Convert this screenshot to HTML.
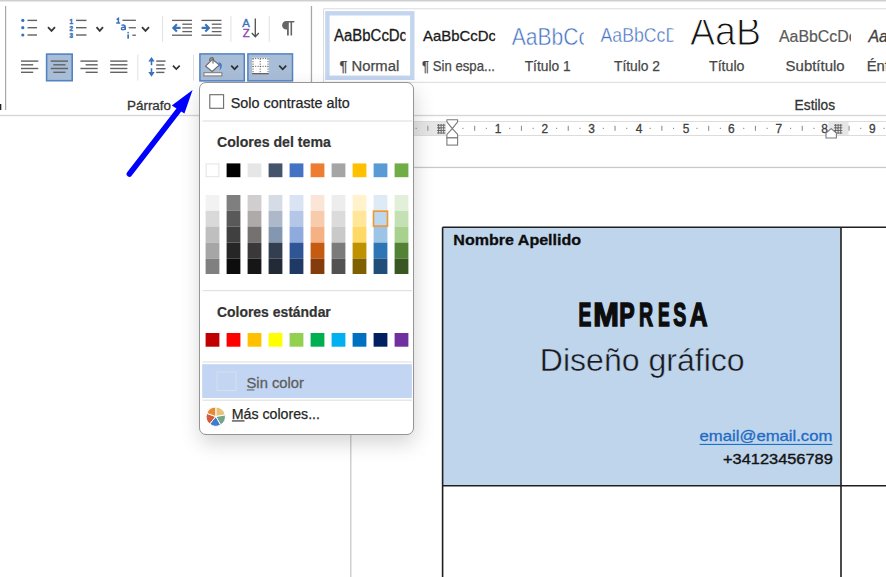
<!DOCTYPE html><html><head><meta charset="utf-8"><style>
html,body{margin:0;padding:0;width:886px;height:577px;overflow:hidden;background:#fff;position:relative;font-family:"Liberation Sans",sans-serif}
</style></head><body>
<svg width="886" height="577" viewBox="0 0 886 577" style="position:absolute;left:0;top:0" font-family="Liberation Sans, sans-serif">
<rect x="0" y="0" width="886" height="577" fill="#ffffff" />
<rect x="0" y="0" width="886" height="1.5" fill="#cfcfcf" />
<rect x="5" y="6" width="1.2" height="104" fill="#a8a8a8" />
<rect x="0" y="104" width="1.3" height="6" fill="#222" />
<circle cx="22.8" cy="20.4" r="1.6" fill="#3873bb"/>
<rect x="27.5" y="19.7" width="9.5" height="1.4" fill="#626262" />
<circle cx="22.8" cy="27.7" r="1.6" fill="#3873bb"/>
<rect x="27.5" y="27.0" width="9.5" height="1.4" fill="#626262" />
<circle cx="22.8" cy="35.0" r="1.6" fill="#3873bb"/>
<rect x="27.5" y="34.3" width="9.5" height="1.4" fill="#626262" />
<path d="M48 27.2 L51.5 30.9 L55 27.2" fill="none" stroke="#383838" stroke-width="1.8"/>
<rect x="76" y="19.7" width="10.5" height="1.4" fill="#626262" />
<rect x="76" y="27.0" width="10.5" height="1.4" fill="#626262" />
<rect x="76" y="34.3" width="10.5" height="1.4" fill="#626262" />
<text x="71.2" y="23.6" font-size="6.3" font-weight="bold" fill="#3873bb" stroke="#3873bb" stroke-width="0.45" text-anchor="middle">1</text>
<text x="71.2" y="31.0" font-size="6.3" font-weight="bold" fill="#3873bb" stroke="#3873bb" stroke-width="0.45" text-anchor="middle">2</text>
<text x="71.2" y="38.4" font-size="6.3" font-weight="bold" fill="#3873bb" stroke="#3873bb" stroke-width="0.45" text-anchor="middle">3</text>
<path d="M96.5 27.2 L99.75 30.9 L103 27.2" fill="none" stroke="#383838" stroke-width="1.8"/>
<path d="M116.6 19.7 L118.4 18.5 V23.2 M116.2 23.0 H120.2" fill="none" stroke="#3873bb" stroke-width="1.5"/>
<path d="M121.4 25.4 C123.5 24.6 125.3 25.2 125.3 27.2 V29.9 M125.2 27.6 C122.3 26.6 120.9 28.3 121.6 29.2 C122.5 30.2 124.6 29.7 125.2 28.6" fill="none" stroke="#3873bb" stroke-width="1.4"/>
<circle cx="128.1" cy="32.6" r="0.85" fill="#3873bb"/>
<rect x="127.3" y="34.4" width="1.7" height="4.2" fill="#3873bb" />
<rect x="122.4" y="19.65" width="13.5" height="1.3" fill="#626262" />
<rect x="128.7" y="27.1" width="7.2" height="1.3" fill="#626262" />
<rect x="132.3" y="34.55" width="3.6" height="1.3" fill="#626262" />
<path d="M142 27.2 L145.5 30.9 L149 27.2" fill="none" stroke="#383838" stroke-width="1.8"/>
<rect x="162.1" y="16" width="1" height="26" fill="#e0e0e0" />
<rect x="230.4" y="16" width="1" height="26" fill="#e0e0e0" />
<rect x="268.7" y="16" width="1" height="26" fill="#e0e0e0" />
<rect x="172" y="19.75" width="20" height="1.3" fill="#626262" />
<rect x="172" y="34.55" width="20" height="1.3" fill="#626262" />
<rect x="182.3" y="23.55" width="9.7" height="1.3" fill="#626262" />
<rect x="182.3" y="27.25" width="9.7" height="1.3" fill="#626262" />
<rect x="182.3" y="30.950000000000003" width="9.7" height="1.3" fill="#626262" />
<rect x="201.5" y="19.75" width="20" height="1.3" fill="#626262" />
<rect x="201.5" y="34.55" width="20" height="1.3" fill="#626262" />
<rect x="211.8" y="23.55" width="9.7" height="1.3" fill="#626262" />
<rect x="211.8" y="27.25" width="9.7" height="1.3" fill="#626262" />
<rect x="211.8" y="30.950000000000003" width="9.7" height="1.3" fill="#626262" />
<path d="M180.6 27.9 H174 M176.9 24.2 L173.3 27.9 L176.9 31.6" fill="none" stroke="#3873bb" stroke-width="2.1"/>
<path d="M201.6 27.9 H208.4 M205.3 24.2 L208.9 27.9 L205.3 31.6" fill="none" stroke="#3873bb" stroke-width="2.1"/>
<text x="246.1" y="27" font-size="11.3" fill="#3873bb" stroke="#3873bb" stroke-width="0.4" text-anchor="middle">A</text>
<text x="246.1" y="37" font-size="11.3" fill="#8a44b0" stroke="#8a44b0" stroke-width="0.4" text-anchor="middle">Z</text>
<path d="M255.3 18.5 L255.3 36.5 M251.8 33 L255.3 36.7 L258.8 33" fill="none" stroke="#505050" stroke-width="1.3"/>
<path d="M294.6 20.9 H286.5 C283.8 20.9 282.1 23 282.1 25.2 C282.1 27.5 283.8 29.5 286.5 29.5 H287 V35.6 H288.8 V22.5 H290.5 V35.6 H292.1 V22.5 H294.1 Z" fill="#666"/>
<rect x="310.8" y="6" width="1.3" height="76" fill="#a8a8a8" />
<rect x="21" y="60.4" width="17.3" height="1.4" fill="#626262" />
<rect x="21" y="64.1" width="12.2" height="1.4" fill="#626262" />
<rect x="21" y="67.8" width="17.3" height="1.4" fill="#626262" />
<rect x="21" y="71.6" width="12.2" height="1.4" fill="#626262" />
<rect x="46.6" y="54.1" width="25.6" height="26.6" fill="#a8bdd8" stroke="#5383c3" stroke-width="1.6"/>
<rect x="50.8" y="60.4" width="17.2" height="1.4" fill="#626262" />
<rect x="53.3" y="64.1" width="12.2" height="1.4" fill="#626262" />
<rect x="50.8" y="67.8" width="17.2" height="1.4" fill="#626262" />
<rect x="53.3" y="71.6" width="12.2" height="1.4" fill="#626262" />
<rect x="80.4" y="60.4" width="17.3" height="1.4" fill="#626262" />
<rect x="85.6" y="64.1" width="12.1" height="1.4" fill="#626262" />
<rect x="80.4" y="67.8" width="17.3" height="1.4" fill="#626262" />
<rect x="85.6" y="71.6" width="12.1" height="1.4" fill="#626262" />
<rect x="110.2" y="60.4" width="17.2" height="1.4" fill="#626262" />
<rect x="110.2" y="64.1" width="17.2" height="1.4" fill="#626262" />
<rect x="110.2" y="67.8" width="17.2" height="1.4" fill="#626262" />
<rect x="110.2" y="71.6" width="17.2" height="1.4" fill="#626262" />
<rect x="137.3" y="54.6" width="1" height="26" fill="#e0e0e0" />
<rect x="193.0" y="54.6" width="1" height="26" fill="#e0e0e0" />
<path d="M151.5 56.9 L154.7 61.5 H152.3 V65.3 H150.7 V61.5 H148.3 Z M150.7 68.3 H152.3 V72 H154.7 L151.5 76.8 L148.3 72 H150.7 Z" fill="#3873bb"/>
<rect x="156.2" y="60.4" width="9.4" height="1.4" fill="#626262" />
<rect x="156.2" y="64.3" width="8.2" height="1.4" fill="#626262" />
<rect x="156.2" y="68.0" width="9.4" height="1.4" fill="#626262" />
<rect x="156.2" y="71.7" width="8.2" height="1.4" fill="#626262" />
<path d="M172.9 65.6 L176.3 69.1 L179.7 65.6" fill="none" stroke="#303030" stroke-width="1.6"/>
<rect x="199.9" y="53.9" width="44.4" height="27" fill="#a8bdd8" stroke="#5383c3" stroke-width="1.5"/>
<path d="M205.6 66.1 L212.4 59.3 L219.4 65 L212.2 71.5 Z" fill="#fff" stroke="#6a6a6a" stroke-width="1.1"/>
<path d="M209.8 61.2 C209.2 56.8 214.2 56.4 213.4 60.2 M213 58.8 V63.6" fill="none" stroke="#6a6a6a" stroke-width="1.2"/>
<path d="M218.3 62.2 C221.8 62.5 223.6 65.8 219.6 70.8 C220.2 67.5 219.9 64.8 218.3 62.2 Z" fill="#3d7cc9"/>
<rect x="203.9" y="72.7" width="18" height="3.2" fill="#fff" stroke="#7a7a7a" stroke-width="1"/>
<path d="M231.2 65.6 L234.6 69.2 L238 65.6" fill="none" stroke="#303030" stroke-width="1.7"/>
<rect x="247.9" y="53.9" width="44.6" height="27" fill="#a8bdd8" stroke="#5383c3" stroke-width="1.5"/>
<rect x="252.1" y="57.8" width="16.7" height="15.5" fill="#ffffff" />
<path d="M252.6 58.6 H268.3 M268 58.6 V73 M253 58.6 V73 M260.2 58.6 V73 M252.6 66.3 H268.3" fill="none" stroke="#444" stroke-width="0.9" stroke-dasharray="1.1 1.4"/>
<rect x="252.1" y="73" width="16.7" height="1.3" fill="#6a6460" />
<path d="M279.2 65.6 L282.7 69.3 L286.2 65.6" fill="none" stroke="#303030" stroke-width="1.7"/>
<text x="127" y="109.6" font-size="13.08" fill="#333333" font-weight="normal" text-anchor="start" stroke="#333333" stroke-width="0.3" textLength="44" lengthAdjust="spacingAndGlyphs" >Párrafo</text>
<path d="M886 8.8 H323.6 V82.3 H886" fill="none" stroke="#dadada" stroke-width="1"/>
<rect x="327.4" y="13.3" width="84.9" height="64.5" fill="#fff" stroke="#c4d5ef" stroke-width="4.4"/>
<defs><clipPath id="c1"><rect x="330" y="15" width="75.5" height="60"/></clipPath><clipPath id="c2"><rect x="415" y="15" width="80.3" height="60"/></clipPath><clipPath id="c3"><rect x="505" y="15" width="78.7" height="60"/></clipPath><clipPath id="c4"><rect x="595" y="15" width="78.3" height="60"/></clipPath><clipPath id="c5"><rect x="680" y="19.9" width="90" height="60"/></clipPath><clipPath id="c6"><rect x="770" y="15" width="81" height="60"/></clipPath></defs>
<text x="334.1" y="41.3" font-size="15.84" fill="#1a1a1a" font-weight="normal" text-anchor="start" textLength="73" lengthAdjust="spacingAndGlyphs" clip-path="url(#c1)" stroke="#1a1a1a" stroke-width="0.3">AaBbCcDc</text>
<text x="423" y="41.4" font-size="15.41" fill="#1a1a1a" font-weight="normal" text-anchor="start" textLength="73" lengthAdjust="spacingAndGlyphs" clip-path="url(#c2)" stroke="#1a1a1a" stroke-width="0.3">AaBbCcDc</text>
<text x="511.8" y="44.9" font-size="24.13" fill="#4472c4" font-weight="normal" text-anchor="start" textLength="103" lengthAdjust="spacingAndGlyphs" clip-path="url(#c3)" stroke="#fff" stroke-width="0.5">AaBbCcDc</text>
<text x="600.5" y="41.5" font-size="20.20" fill="#4472c4" font-weight="normal" text-anchor="start" textLength="86.6" lengthAdjust="spacingAndGlyphs" clip-path="url(#c4)" stroke="#fff" stroke-width="0.4">AaBbCcDc</text>
<text x="690" y="44.6" font-size="41" fill="#111" textLength="71" lengthAdjust="spacingAndGlyphs" clip-path="url(#c5)" stroke="#fff" stroke-width="1.1">AaB</text>
<text x="779" y="42" font-size="15.99" fill="#595959" font-weight="normal" text-anchor="start" textLength="77.7" lengthAdjust="spacingAndGlyphs" clip-path="url(#c6)" stroke="#595959" stroke-width="0.2">AaBbCcDc</text>
<text x="868.4" y="42" font-size="15.99" fill="#404040" font-weight="normal" text-anchor="start" font-style="italic" stroke="#404040" stroke-width="0.3">Aa</text>
<text x="339.4" y="71" font-size="14.83" fill="#474747" font-weight="normal" text-anchor="start" stroke="#474747" stroke-width="0.25" textLength="59.8" lengthAdjust="spacingAndGlyphs" >¶ Normal</text>
<text x="422" y="71" font-size="14.83" fill="#474747" font-weight="normal" text-anchor="start" stroke="#474747" stroke-width="0.25" textLength="73" lengthAdjust="spacingAndGlyphs" >¶ Sin espa...</text>
<text x="524.7" y="71" font-size="14.83" fill="#474747" font-weight="normal" text-anchor="start" stroke="#474747" stroke-width="0.25" textLength="46" lengthAdjust="spacingAndGlyphs" >Título 1</text>
<text x="614" y="71" font-size="14.83" fill="#474747" font-weight="normal" text-anchor="start" stroke="#474747" stroke-width="0.25" textLength="46" lengthAdjust="spacingAndGlyphs" >Título 2</text>
<text x="709" y="71" font-size="14.83" fill="#474747" font-weight="normal" text-anchor="start" stroke="#474747" stroke-width="0.25" textLength="35.5" lengthAdjust="spacingAndGlyphs" >Título</text>
<text x="785.6" y="71" font-size="14.83" fill="#474747" font-weight="normal" text-anchor="start" stroke="#474747" stroke-width="0.25" textLength="59" lengthAdjust="spacingAndGlyphs" >Subtítulo</text>
<text x="866.7" y="71" font-size="14.83" fill="#474747" font-weight="normal" text-anchor="start" stroke="#474747" stroke-width="0.25" >Énfasis</text>
<text x="794.6" y="110" font-size="14.39" fill="#333333" font-weight="normal" text-anchor="start" stroke="#333333" stroke-width="0.3" textLength="40.5" lengthAdjust="spacingAndGlyphs" >Estilos</text>
<rect x="0" y="114.8" width="886" height="1.4" fill="#d6d6d6" />
<rect x="414" y="121" width="472" height="14.5" fill="#ffffff" />
<rect x="414" y="121" width="472" height="1" fill="#dcdcdc" />
<rect x="414" y="135" width="472" height="1" fill="#dcdcdc" />
<rect x="414" y="122" width="32" height="13" fill="#e6e6e6" />
<rect x="828.5" y="122" width="20" height="13" fill="#e6e6e6" />
<text x="498" y="133.3" font-size="11.92" fill="#404040" font-weight="normal" text-anchor="middle" stroke="#404040" stroke-width="0.3" >1</text>
<text x="544.7" y="133.3" font-size="11.92" fill="#404040" font-weight="normal" text-anchor="middle" stroke="#404040" stroke-width="0.3" >2</text>
<text x="591.6" y="133.3" font-size="11.92" fill="#404040" font-weight="normal" text-anchor="middle" stroke="#404040" stroke-width="0.3" >3</text>
<text x="639" y="133.3" font-size="11.92" fill="#404040" font-weight="normal" text-anchor="middle" stroke="#404040" stroke-width="0.3" >4</text>
<text x="686" y="133.3" font-size="11.92" fill="#404040" font-weight="normal" text-anchor="middle" stroke="#404040" stroke-width="0.3" >5</text>
<text x="731.2" y="133.3" font-size="11.92" fill="#404040" font-weight="normal" text-anchor="middle" stroke="#404040" stroke-width="0.3" >6</text>
<text x="778.7" y="133.3" font-size="11.92" fill="#404040" font-weight="normal" text-anchor="middle" stroke="#404040" stroke-width="0.3" >7</text>
<text x="824.5" y="133.3" font-size="11.92" fill="#404040" font-weight="normal" text-anchor="middle" stroke="#404040" stroke-width="0.3" >8</text>
<text x="872.4" y="133.3" font-size="11.92" fill="#404040" font-weight="normal" text-anchor="middle" stroke="#404040" stroke-width="0.3" >9</text>
<rect x="415.6" y="127.8" width="1.1" height="1.1" fill="#808080" />
<rect x="427.3" y="125.8" width="1.1" height="5" fill="#909090" />
<rect x="439.0" y="127.8" width="1.1" height="1.1" fill="#808080" />
<rect x="462.4" y="127.8" width="1.1" height="1.1" fill="#808080" />
<rect x="474.09999999999997" y="125.8" width="1.1" height="5" fill="#909090" />
<rect x="485.79999999999995" y="127.8" width="1.1" height="1.1" fill="#808080" />
<rect x="509.2" y="127.8" width="1.1" height="1.1" fill="#808080" />
<rect x="520.9" y="125.8" width="1.1" height="5" fill="#909090" />
<rect x="532.6" y="127.8" width="1.1" height="1.1" fill="#808080" />
<rect x="556.0" y="127.8" width="1.1" height="1.1" fill="#808080" />
<rect x="567.7" y="125.8" width="1.1" height="5" fill="#909090" />
<rect x="579.4" y="127.8" width="1.1" height="1.1" fill="#808080" />
<rect x="602.8" y="127.8" width="1.1" height="1.1" fill="#808080" />
<rect x="614.5" y="125.8" width="1.1" height="5" fill="#909090" />
<rect x="626.2" y="127.8" width="1.1" height="1.1" fill="#808080" />
<rect x="649.5999999999999" y="127.8" width="1.1" height="1.1" fill="#808080" />
<rect x="661.3" y="125.8" width="1.1" height="5" fill="#909090" />
<rect x="673.0" y="127.8" width="1.1" height="1.1" fill="#808080" />
<rect x="696.4" y="127.8" width="1.1" height="1.1" fill="#808080" />
<rect x="708.0999999999999" y="125.8" width="1.1" height="5" fill="#909090" />
<rect x="719.8" y="127.8" width="1.1" height="1.1" fill="#808080" />
<rect x="743.2" y="127.8" width="1.1" height="1.1" fill="#808080" />
<rect x="754.9" y="125.8" width="1.1" height="5" fill="#909090" />
<rect x="766.5999999999999" y="127.8" width="1.1" height="1.1" fill="#808080" />
<rect x="790.0" y="127.8" width="1.1" height="1.1" fill="#808080" />
<rect x="801.7" y="125.8" width="1.1" height="5" fill="#909090" />
<rect x="813.4" y="127.8" width="1.1" height="1.1" fill="#808080" />
<rect x="836.8" y="127.8" width="1.1" height="1.1" fill="#808080" />
<rect x="848.5" y="125.8" width="1.1" height="5" fill="#909090" />
<rect x="860.2" y="127.8" width="1.1" height="1.1" fill="#808080" />
<rect x="883.5999999999999" y="127.8" width="1.1" height="1.1" fill="#808080" />
<path d="M437 125.2 H445.3 M437 127.8 H445.3 M437 130.5 H445.3 M437 133.0 H445.3 M438.6 124 V133.7 M441.15 124 V133.7 M443.7 124 V133.7 " stroke="#606060" stroke-width="0.9" fill="none"/>
<path d="M834 125.2 H842.3 M834 127.8 H842.3 M834 130.5 H842.3 M834 133.0 H842.3 M835.6 124 V133.7 M838.15 124 V133.7 M840.7 124 V133.7 " stroke="#606060" stroke-width="0.9" fill="none"/>
<path d="M446.9 119.8 H457.6 V121.8 L452.3 128.6 L457.6 134.3 V137.9 H446.9 V134.3 L452.3 128.6 L446.9 121.8 Z" fill="#fff" stroke="#7a7a7a" stroke-width="1.1" stroke-linejoin="round"/>
<rect x="446.9" y="137.9" width="10.7" height="7.2" fill="#fff" stroke="#7a7a7a" stroke-width="1.1"/>
<path d="M826 138 V133 L831.2 128.6 L836.4 133 V138 Z" fill="#fff" stroke="#7a7a7a" stroke-width="1.1" stroke-linejoin="round"/>
<rect x="414" y="166.8" width="472" height="1.3" fill="#c8c8c8" />
<rect x="350.2" y="434" width="1.2" height="143" fill="#c4c4c4" />
<rect x="442.5" y="227.5" width="398.5" height="258.5" fill="#bed5ec" />
<path d="M442.6 227.2 H886 M442.6 227.2 V577 M841 227.2 V577 M442.6 485.8 H886" stroke="#1f1f1f" stroke-width="1.6" fill="none"/>
<text x="453.3" y="244.7" font-size="15.12" fill="#0d0d0d" font-weight="bold" text-anchor="start" stroke="#0d0d0d" stroke-width="0.3" textLength="127.8" lengthAdjust="spacingAndGlyphs" >Nombre Apellido</text>
<text x="578.46" y="325.9" font-size="32.85" fill="#0d0d0d" font-weight="bold" text-anchor="start" stroke="#0d0d0d" stroke-width="1.5" textLength="12.84" lengthAdjust="spacingAndGlyphs" >E</text>
<text x="593.19" y="325.9" font-size="32.85" fill="#0d0d0d" font-weight="bold" text-anchor="start" stroke="#0d0d0d" stroke-width="1.5" textLength="25.61" lengthAdjust="spacingAndGlyphs" >M</text>
<text x="619.2" y="325.9" font-size="32.85" fill="#0d0d0d" font-weight="bold" text-anchor="start" stroke="#0d0d0d" stroke-width="1.5" textLength="15.44" lengthAdjust="spacingAndGlyphs" >P</text>
<text x="639.04" y="325.9" font-size="32.85" fill="#0d0d0d" font-weight="bold" text-anchor="start" stroke="#0d0d0d" stroke-width="1.5" textLength="14.11" lengthAdjust="spacingAndGlyphs" >R</text>
<text x="657.97" y="325.9" font-size="32.85" fill="#0d0d0d" font-weight="bold" text-anchor="start" stroke="#0d0d0d" stroke-width="1.5" textLength="11.77" lengthAdjust="spacingAndGlyphs" >E</text>
<text x="673.19" y="325.9" font-size="32.85" fill="#0d0d0d" font-weight="bold" text-anchor="start" stroke="#0d0d0d" stroke-width="1.5" textLength="13.03" lengthAdjust="spacingAndGlyphs" >S</text>
<text x="689.64" y="325.9" font-size="32.85" fill="#0d0d0d" font-weight="bold" text-anchor="start" stroke="#0d0d0d" stroke-width="1.5" textLength="17.76" lengthAdjust="spacingAndGlyphs" >A</text>
<text x="539.8" y="370.5" font-size="31.98" fill="#1a1a1a" font-weight="normal" text-anchor="start" stroke="#bed5ec" stroke-width="0.45" textLength="204.8" lengthAdjust="spacingAndGlyphs" >Diseño gráfico</text>
<text x="699.6" y="441.1" font-size="14.54" fill="#1f6bc4" font-weight="normal" text-anchor="start" stroke="#1f6bc4" stroke-width="0.3" textLength="132.8" lengthAdjust="spacingAndGlyphs" >email@email.com</text>
<rect x="699.6" y="443.9" width="132.8" height="1.1" fill="#1f6fc5" />
<text x="723" y="464.1" font-size="15.41" fill="#141414" font-weight="normal" text-anchor="start" stroke="#141414" stroke-width="0.4" textLength="109.8" lengthAdjust="spacingAndGlyphs" >+34123456789</text>
</svg>
<div style="position:absolute;left:199.3px;top:82px;width:215.2px;height:352.6px;background:#fff;border:1.5px solid #959595;border-radius:7px;box-sizing:border-box;box-shadow:1px 8px 20px rgba(0,0,0,0.17)"></div>
<svg width="886" height="577" viewBox="0 0 886 577" style="position:absolute;left:0;top:0" font-family="Liberation Sans, sans-serif">
<rect x="209.8" y="94.7" width="13.8" height="13.6" fill="#fff" stroke="#6a6a6a" stroke-width="1.1"/>
<text x="230.8" y="107.8" font-size="15.26" fill="#262626" font-weight="normal" text-anchor="start" stroke="#262626" stroke-width="0.25" textLength="118.9" lengthAdjust="spacingAndGlyphs" >Solo contraste alto</text>
<rect x="202.5" y="120.4" width="209.5" height="1.2" fill="#e2e2e2" />
<text x="217" y="146.6" font-size="15.12" fill="#333333" font-weight="bold" text-anchor="start" stroke="#333333" stroke-width="0.2" textLength="113.8" lengthAdjust="spacingAndGlyphs" >Colores del tema</text>
<rect x="206.1" y="163.9" width="12.8" height="12.8" fill="#fff" stroke="#e3e3e3" stroke-width="1"/>
<rect x="226.6" y="163.4" width="13.8" height="13.8" fill="#000000" />
<rect x="247.6" y="163.4" width="13.8" height="13.8" fill="#e7e6e6" />
<rect x="268.6" y="163.4" width="13.8" height="13.8" fill="#44546a" />
<rect x="289.6" y="163.4" width="13.8" height="13.8" fill="#4472c4" />
<rect x="310.6" y="163.4" width="13.8" height="13.8" fill="#ed7d31" />
<rect x="331.6" y="163.4" width="13.8" height="13.8" fill="#a5a5a5" />
<rect x="352.6" y="163.4" width="13.8" height="13.8" fill="#ffc000" />
<rect x="373.6" y="163.4" width="13.8" height="13.8" fill="#5b9bd5" />
<rect x="394.6" y="163.4" width="13.8" height="13.8" fill="#70ad47" />
<rect x="205.6" y="195.0" width="13.8" height="15.800000000000011" fill="#f2f2f2" />
<rect x="205.6" y="210.8" width="13.8" height="15.699999999999989" fill="#d9d9d9" />
<rect x="205.6" y="226.5" width="13.8" height="16.099999999999994" fill="#bfbfbf" />
<rect x="205.6" y="242.6" width="13.8" height="16.099999999999994" fill="#a6a6a6" />
<rect x="205.6" y="258.7" width="13.8" height="15.300000000000011" fill="#808080" />
<rect x="226.6" y="195.0" width="13.8" height="15.800000000000011" fill="#7f7f7f" />
<rect x="226.6" y="210.8" width="13.8" height="15.699999999999989" fill="#595959" />
<rect x="226.6" y="226.5" width="13.8" height="16.099999999999994" fill="#404040" />
<rect x="226.6" y="242.6" width="13.8" height="16.099999999999994" fill="#262626" />
<rect x="226.6" y="258.7" width="13.8" height="15.300000000000011" fill="#0d0d0d" />
<rect x="247.6" y="195.0" width="13.8" height="15.800000000000011" fill="#d0cece" />
<rect x="247.6" y="210.8" width="13.8" height="15.699999999999989" fill="#aeaaaa" />
<rect x="247.6" y="226.5" width="13.8" height="16.099999999999994" fill="#757171" />
<rect x="247.6" y="242.6" width="13.8" height="16.099999999999994" fill="#3a3838" />
<rect x="247.6" y="258.7" width="13.8" height="15.300000000000011" fill="#161616" />
<rect x="268.6" y="195.0" width="13.8" height="15.800000000000011" fill="#d6dce5" />
<rect x="268.6" y="210.8" width="13.8" height="15.699999999999989" fill="#adb9ca" />
<rect x="268.6" y="226.5" width="13.8" height="16.099999999999994" fill="#8497b0" />
<rect x="268.6" y="242.6" width="13.8" height="16.099999999999994" fill="#333f50" />
<rect x="268.6" y="258.7" width="13.8" height="15.300000000000011" fill="#222a35" />
<rect x="289.6" y="195.0" width="13.8" height="15.800000000000011" fill="#dae3f3" />
<rect x="289.6" y="210.8" width="13.8" height="15.699999999999989" fill="#b4c7e7" />
<rect x="289.6" y="226.5" width="13.8" height="16.099999999999994" fill="#8faadc" />
<rect x="289.6" y="242.6" width="13.8" height="16.099999999999994" fill="#2f5597" />
<rect x="289.6" y="258.7" width="13.8" height="15.300000000000011" fill="#203864" />
<rect x="310.6" y="195.0" width="13.8" height="15.800000000000011" fill="#fbe5d6" />
<rect x="310.6" y="210.8" width="13.8" height="15.699999999999989" fill="#f8cbad" />
<rect x="310.6" y="226.5" width="13.8" height="16.099999999999994" fill="#f4b183" />
<rect x="310.6" y="242.6" width="13.8" height="16.099999999999994" fill="#c55a11" />
<rect x="310.6" y="258.7" width="13.8" height="15.300000000000011" fill="#843c0c" />
<rect x="331.6" y="195.0" width="13.8" height="15.800000000000011" fill="#ededed" />
<rect x="331.6" y="210.8" width="13.8" height="15.699999999999989" fill="#dbdbdb" />
<rect x="331.6" y="226.5" width="13.8" height="16.099999999999994" fill="#c9c9c9" />
<rect x="331.6" y="242.6" width="13.8" height="16.099999999999994" fill="#7b7b7b" />
<rect x="331.6" y="258.7" width="13.8" height="15.300000000000011" fill="#525252" />
<rect x="352.6" y="195.0" width="13.8" height="15.800000000000011" fill="#fff2cc" />
<rect x="352.6" y="210.8" width="13.8" height="15.699999999999989" fill="#ffe699" />
<rect x="352.6" y="226.5" width="13.8" height="16.099999999999994" fill="#ffd966" />
<rect x="352.6" y="242.6" width="13.8" height="16.099999999999994" fill="#bf9000" />
<rect x="352.6" y="258.7" width="13.8" height="15.300000000000011" fill="#7f6000" />
<rect x="373.6" y="195.0" width="13.8" height="15.800000000000011" fill="#deebf7" />
<rect x="373.6" y="210.8" width="13.8" height="15.699999999999989" fill="#bdd7ee" />
<rect x="373.6" y="226.5" width="13.8" height="16.099999999999994" fill="#9dc3e6" />
<rect x="373.6" y="242.6" width="13.8" height="16.099999999999994" fill="#2e75b6" />
<rect x="373.6" y="258.7" width="13.8" height="15.300000000000011" fill="#1f4e79" />
<rect x="394.6" y="195.0" width="13.8" height="15.800000000000011" fill="#e2f0d9" />
<rect x="394.6" y="210.8" width="13.8" height="15.699999999999989" fill="#c5e0b4" />
<rect x="394.6" y="226.5" width="13.8" height="16.099999999999994" fill="#a9d18e" />
<rect x="394.6" y="242.6" width="13.8" height="16.099999999999994" fill="#548235" />
<rect x="394.6" y="258.7" width="13.8" height="15.300000000000011" fill="#385723" />
<rect x="373.5" y="211.2" width="14.0" height="14.9" fill="none" stroke="#f0962d" stroke-width="1.6"/>
<rect x="202.5" y="290" width="209.5" height="1.2" fill="#e2e2e2" />
<text x="217" y="316.6" font-size="14.54" fill="#333333" font-weight="bold" text-anchor="start" stroke="#333333" stroke-width="0.2" textLength="113.8" lengthAdjust="spacingAndGlyphs" >Colores estándar</text>
<rect x="205.6" y="333.0" width="13.8" height="13.7" fill="#c00000" />
<rect x="226.6" y="333.0" width="13.8" height="13.7" fill="#ff0000" />
<rect x="247.6" y="333.0" width="13.8" height="13.7" fill="#ffc000" />
<rect x="268.6" y="333.0" width="13.8" height="13.7" fill="#ffff00" />
<rect x="289.6" y="333.0" width="13.8" height="13.7" fill="#92d050" />
<rect x="310.6" y="333.0" width="13.8" height="13.7" fill="#00b050" />
<rect x="331.6" y="333.0" width="13.8" height="13.7" fill="#00b0f0" />
<rect x="352.6" y="333.0" width="13.8" height="13.7" fill="#0070c0" />
<rect x="373.6" y="333.0" width="13.8" height="13.7" fill="#002060" />
<rect x="394.6" y="333.0" width="13.8" height="13.7" fill="#7030a0" />
<rect x="202.5" y="361.4" width="209.5" height="1.2" fill="#e2e2e2" />
<rect x="202.2" y="364.2" width="209.7" height="33.8" fill="#c2d5f2" />
<rect x="202.5" y="399.6" width="209.5" height="1.2" fill="#e2e2e2" />
<rect x="217" y="372" width="19" height="18.5" fill="none" stroke="#d6e0ee" stroke-width="1"/>
<text x="246.5" y="387.8" font-size="15.41" fill="#5e5e5e" font-weight="normal" text-anchor="start" stroke="#5e5e5e" stroke-width="0.3" textLength="57.5" lengthAdjust="spacingAndGlyphs" >Sin color</text>
<rect x="246.8" y="389.4" width="7.6" height="1.1" fill="#6a6a6a" />
<path d="M215.8 416.6 L215.80 407.00 A9.6 9.6 0 0 1 225.25 414.93 Z" fill="#e6c27a" stroke="#fff" stroke-width="1"/>
<path d="M215.8 416.6 L225.25 414.93 A9.6 9.6 0 0 1 220.60 424.91 Z" fill="#72a68a" stroke="#fff" stroke-width="1"/>
<path d="M215.8 416.6 L220.60 424.91 A9.6 9.6 0 0 1 209.63 423.95 Z" fill="#3f7ecb" stroke="#fff" stroke-width="1"/>
<path d="M215.8 416.6 L209.63 423.95 A9.6 9.6 0 0 1 206.78 413.32 Z" fill="#d65a3c" stroke="#fff" stroke-width="1"/>
<path d="M215.8 416.6 L206.78 413.32 A9.6 9.6 0 0 1 215.80 407.00 Z" fill="#e68a3a" stroke="#fff" stroke-width="1"/>
<text x="231.7" y="419.0" font-size="15.41" fill="#262626" font-weight="normal" text-anchor="start" stroke="#262626" stroke-width="0.25" textLength="88.3" lengthAdjust="spacingAndGlyphs" >Más colores...</text>
<rect x="231.9" y="420.4" width="12.6" height="1.1" fill="#262626" />
</svg>
<svg width="886" height="577" viewBox="0 0 886 577" style="position:absolute;left:0;top:0">
<path d="M129.4 174 L180 108.5" stroke="#0000ff" stroke-width="5.6" stroke-linecap="round"/>
<path d="M192.6 90 L171.8 105.6 L184.4 113.4 Z" fill="#0000ff"/>
</svg>
</body></html>
